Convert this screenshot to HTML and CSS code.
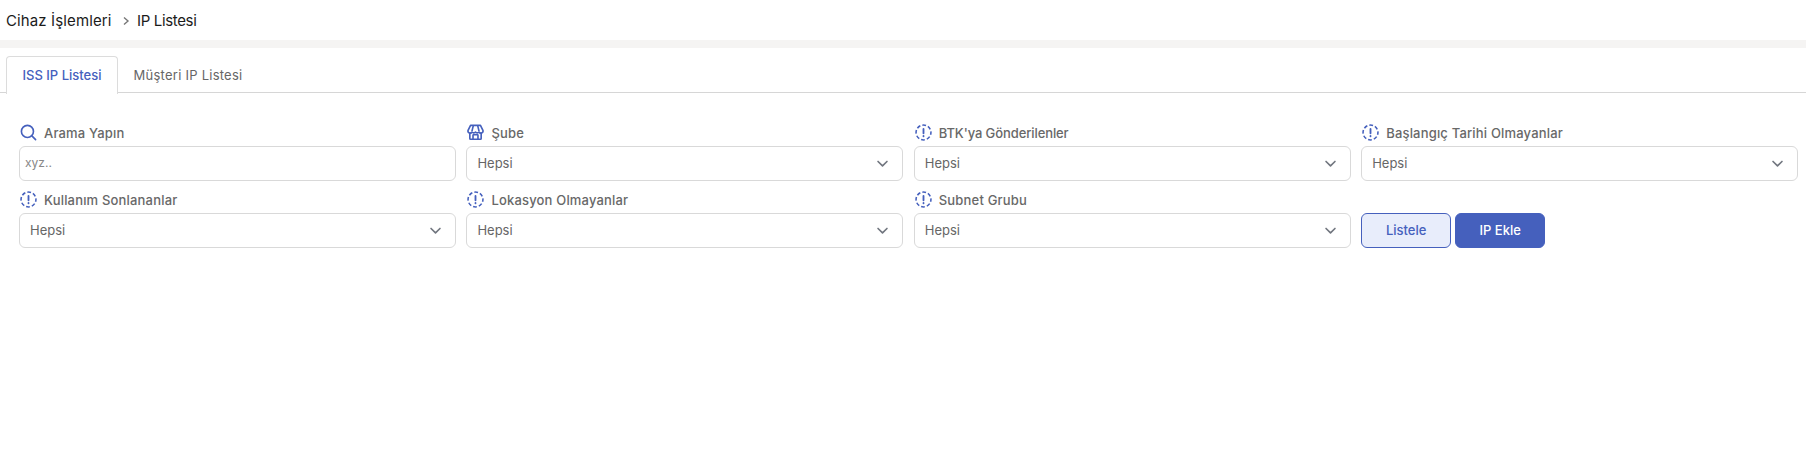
FILE: index.html
```html
<!DOCTYPE html>
<html lang="tr">
<head>
<meta charset="utf-8">
<title>IP Listesi</title>
<link rel="stylesheet" href="styles.css">
</head>
<body>
<svg class="defs" width="0" height="0" aria-hidden="true">
  <symbol id="i-alert" viewBox="0 0 24 24">
    <circle cx="12" cy="12" r="10.500" fill="none" stroke="currentColor" stroke-width="2.200" stroke-dasharray="5.300 2.950" stroke-dashoffset="2"/>
    <path d="M12 7v6M12 17v.3" fill="none" stroke="currentColor" stroke-width="2.600" stroke-linecap="round"/>
  </symbol>
  <symbol id="i-chev" viewBox="0 0 16 16">
    <path d="M2.500 5.500 8 11l5.500-5.500" fill="none" stroke="currentColor" stroke-width="2" stroke-linecap="round" stroke-linejoin="round"/>
  </symbol>
</svg>
<header class="crumbs">
  <span class="crumb-parent">Cihaz İşlemleri</span>
  <svg class="crumb-sep" viewBox="0 0 10 10"><path d="M3 1.500 7 5 3 8.500" fill="none" stroke="currentColor" stroke-width="1.400"/></svg>
  <span class="crumb-current">IP Listesi</span>
</header>
<div class="band"></div>
<nav class="tabs">
  <a class="tab tab-active">ISS IP Listesi</a>
  <a class="tab tab-plain">Müşteri IP Listesi</a>
</nav>
<main class="filters">
  <div class="field">
    <label class="label">
      <svg class="icon" viewBox="0 0 24 24"><circle cx="10.500" cy="10.500" r="8.500" fill="none" stroke="currentColor" stroke-width="2.300"/><path d="m16.800 16.800 5.200 5.200" stroke="currentColor" stroke-width="2.300" stroke-linecap="round"/></svg>
      Arama Yapın</label>
    <div class="control control-input">xyz..</div>
  </div>
  <div class="field">
    <label class="label">
      <svg class="icon" viewBox="0 0 24 24" fill="none" stroke="currentColor" stroke-width="2.300" stroke-linejoin="round"><path d="M4 12v8.500a1 1 0 0 0 1 1h14a1 1 0 0 0 1-1V12"/><path d="M5 2h14l3.500 7a3 3 0 0 1-5.500 2.300 3.600 3.600 0 0 1-5 0 3.600 3.600 0 0 1-5 0A3 3 0 0 1 1.500 9z"/><path d="M8.500 21.500V16a1 1 0 0 1 1-1h5a1 1 0 0 1 1 1v5.500M9 2 7 10M15 2l2 8"/></svg>
      Şube</label>
    <div class="control"><span>Hepsi</span><svg class="chev"><use href="#i-chev"/></svg></div>
  </div>
  <div class="field">
    <label class="label label-tight"><svg class="icon"><use href="#i-alert"/></svg>BTK'ya Gönderilenler</label>
    <div class="control"><span>Hepsi</span><svg class="chev"><use href="#i-chev"/></svg></div>
  </div>
  <div class="field">
    <label class="label"><svg class="icon"><use href="#i-alert"/></svg>Başlangıç Tarihi Olmayanlar</label>
    <div class="control"><span>Hepsi</span><svg class="chev"><use href="#i-chev"/></svg></div>
  </div>
  <div class="field">
    <label class="label"><svg class="icon"><use href="#i-alert"/></svg>Kullanım Sonlananlar</label>
    <div class="control"><span>Hepsi</span><svg class="chev"><use href="#i-chev"/></svg></div>
  </div>
  <div class="field">
    <label class="label"><svg class="icon"><use href="#i-alert"/></svg>Lokasyon Olmayanlar</label>
    <div class="control"><span>Hepsi</span><svg class="chev"><use href="#i-chev"/></svg></div>
  </div>
  <div class="field">
    <label class="label"><svg class="icon"><use href="#i-alert"/></svg>Subnet Grubu</label>
    <div class="control"><span>Hepsi</span><svg class="chev"><use href="#i-chev"/></svg></div>
  </div>
  <div class="actions">
    <button class="btn btn-soft">Listele</button>
    <button class="btn btn-solid">IP Ekle</button>
  </div>
</main>
</body>
</html>
```
FILE: styles.css
```css
* { box-sizing: border-box; }
html, body { margin: 0; padding: 0; background: #fff; }
body { width: 1806px; height: 460px; overflow: hidden; font-family: Inter, "Noto Sans", sans-serif; color: #555; }
.defs { position: absolute; }

.crumbs { height: 40px; padding: 0 0 0 6px; display: flex; align-items: center; font-size: 15px; color: #1b1b1b; }
.crumb-parent { letter-spacing: 0.12px; }
.crumb-current { letter-spacing: -0.35px; }
.crumb-sep { width: 10px; height: 10px; margin: 1px 6.500px 0 9px; color: #777; }
.band { height: 8px; background: #f5f4f3; }

.tabs { margin-top: 8px; height: 37px; display: flex; padding-left: 6px; border-bottom: 1px solid #d6d6d6; font-size: 13px; }
.tab { height: 37px; display: flex; align-items: center; justify-content: center; }
.tab-active { width: 112px; height: 38px; padding-bottom: 1px; background: #fff; border: 1px solid #dcdcdc; border-bottom: 0; border-radius: 4px 4px 0 0; color: #4560bd; font-weight: 500; letter-spacing: 0; }
.tab-plain { width: 140px; color: #666; letter-spacing: 0.25px; }

.filters { padding: 29px 8px 0 19px; display: grid; grid-template-columns: repeat(4, 437px); column-gap: 10.400px; row-gap: 8px; }
.field { display: flex; flex-direction: column; min-width: 0; }
.label { height: 24px; padding: 0 0 2px 1px; display: flex; align-items: center; gap: 7px; font-size: 13px; font-weight: 500; letter-spacing: 0.18px; color: #686868; }
.label-tight { letter-spacing: -0.1px; }
.icon { width: 17px; height: 17px; flex: none; color: #4560bd; margin-top: -2px; }
.control { height: 35px; padding: 0 13px 2px 10px; display: flex; align-items: center; justify-content: space-between; background: #fff; border: 1px solid #d9d9d9; border-radius: 6px; font-size: 13px; color: #666; }
.control-input { padding-left: 5px; font-size: 12px; color: #888; }
.chev { width: 13px; height: 13px; color: #71767f; margin-top: 2px; }

.actions { display: flex; align-items: flex-end; gap: 4px; }
.btn { width: 90px; height: 35px; padding: 0 0 1px; border-radius: 6px; font: 500 13px Inter, "Noto Sans", sans-serif; letter-spacing: 0; }
.btn-soft { background: #e8edfb; border: 1px solid #4560bd; color: #4560bd; }
.btn-solid { background: #4560bd; border: 1px solid #4560bd; color: #fff; }
```
